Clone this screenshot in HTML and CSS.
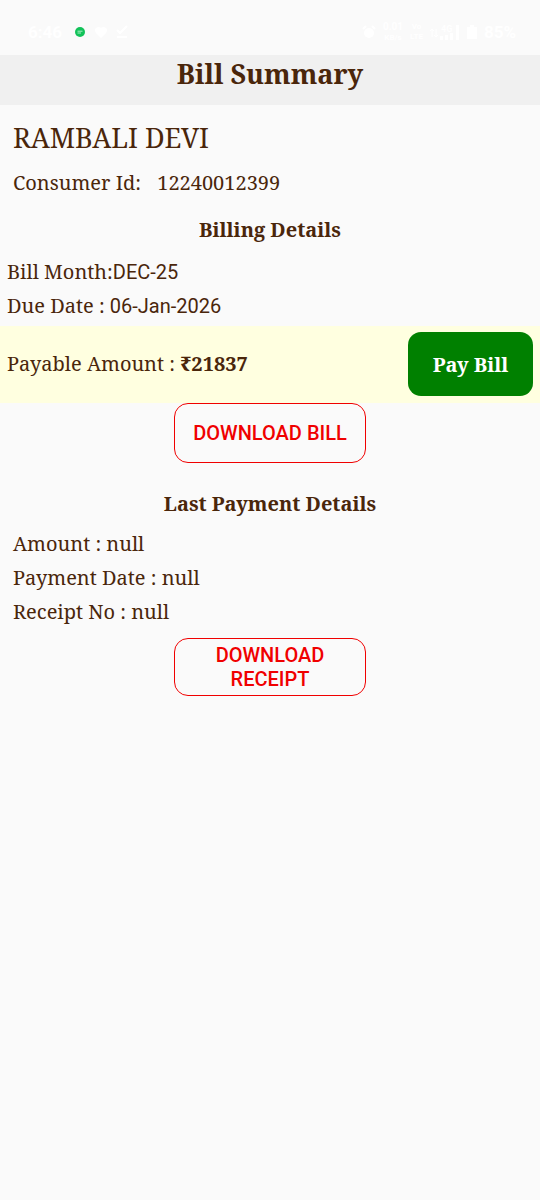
FILE: index.html
```html
<!DOCTYPE html>
<html lang="en">
<head>
<meta charset="utf-8">
<title>Bill Summary</title>
<meta name="viewport" content="width=device-width, initial-scale=1">
<link rel="stylesheet" href="styles.css">
</head>
<body>

<div class="statusbar">
  <span class="clock">6:46</span>
  <svg class="icon chat" viewBox="0 0 14 14">
    <circle cx="7" cy="7" r="5" fill="#12c259"/>
    <path d="M4.5 6.2h5M4.5 8h3.5" stroke="#b9f0cf" stroke-width="0.9"/>
  </svg>
  <svg class="icon" viewBox="0 0 14 14">
    <path d="M7 13L2 8q-2-3 0-5 3-2 5 0 2-2 5 0 2 2 0 5z" fill="#fff"/>
  </svg>
  <svg class="icon" viewBox="0 0 14 14">
    <path d="M2 5l3 3 7-7M2 12h10" fill="none" stroke="#fff" stroke-width="2"/>
  </svg>
  <span class="spacer"></span>
  <svg class="icon" viewBox="0 0 14 14">
    <circle cx="7" cy="8" r="5" fill="#fff"/>
    <path d="M1 4l3-3M13 4l-3-3" stroke="#fff" stroke-width="2"/>
  </svg>
  <span class="stack"><span class="speed">0.01</span><span>KB/s</span></span>
  <span class="stack"><span>Vo</span><span>LTE</span></span>
  <svg class="signal" viewBox="0 0 30 16">
    <path d="M2 13V5M0 7l2-2 2 2M6 5v8M4 11l2 2 2-2" fill="none" stroke="#fff"/>
    <path d="M10 12h3v4h-3zM15 11h3v5h-3zM20 9h3v7h-3zM26 1h3v15h-3z" fill="#fff"/>
    <text x="11" y="8" class="network">4G</text>
  </svg>
  <svg class="battery" viewBox="0 0 10 14">
    <path d="M3 0h4v2h3v12H0V2h3z" fill="#fff"/>
  </svg>
  <span class="clock">85%</span>
</div>

<h1>Bill Summary</h1>

<div class="consumer">
  <p class="name">RAMBALI DEVI</p>
  <p class="row"><span>Consumer Id:</span> <span class="consumer-id">12240012399</span></p>
</div>

<h2>Billing Details</h2>
<div class="billing">
  <p>Bill Month:<span class="value">DEC-25</span></p>
  <p>Due Date : <span class="value">06-Jan-2026</span></p>
</div>

<div class="payable">
  <p>Payable Amount : <b>₹21837</b></p>
  <button class="pay">Pay Bill</button>
</div>
<button class="download">DOWNLOAD BILL</button>

<h2 class="last">Last Payment Details</h2>
<div class="payment">
  <p>Amount : null</p>
  <p>Payment Date : null</p>
  <p>Receipt No : null</p>
</div>
<button class="download receipt">DOWNLOAD RECEIPT</button>

</body>
</html>
```
FILE: styles.css
```css
* {
  box-sizing: border-box;
}

body {
  margin: 0;
  background-color: #fafafa;
  color: #4a260b;
  font-family: "Noto Serif", "DejaVu Serif Condensed", "DejaVu Serif", serif;
  font-size: 20px;
  line-height: 34px;
}

h1, h2, p {
  margin: 0;
}

.statusbar {
  display: flex;
  align-items: center;
  gap: 7px;
  padding: 20px 24px 11px 28px;
  color: #fff;
  font-family: Roboto, sans-serif;
  line-height: 24px;
}

.clock {
  font-size: 17px;
  font-weight: bold;
}

.spacer {
  flex: 1;
}

.icon {
  width: 14px;
  height: 14px;
}

.chat {
  margin-left: 4px;
}

.stack {
  display: flex;
  flex-direction: column;
  font-size: 8px;
  font-weight: bold;
  line-height: 10px;
  text-align: center;
}

.speed {
  font-size: 10px;
  line-height: 12px;
}

.signal {
  width: 30px;
  height: 16px;
}

.network {
  fill: #fff;
  font-size: 9px;
  font-weight: bold;
}

.battery {
  width: 10px;
  height: 14px;
}

h1 {
  min-height: 50px;
  background-color: #f0f0f0;
  font-size: 27px;
  line-height: 38px;
  text-align: center;
}

h2 {
  font-size: 20px;
  line-height: 34px;
  text-align: center;
}

.consumer {
  padding: 12px 13px 6px;
}

.name {
  font-size: 27px;
  line-height: 42px;
}

.row {
  line-height: 48px;
}

.consumer-id {
  margin-left: 11px;
}

.billing {
  padding: 8px 7px 3px;
}

.value {
  font-family: Roboto, sans-serif;
}

.payable {
  display: flex;
  align-items: center;
  justify-content: space-between;
  padding: 6px 7px 7px;
  background-color: #ffffe0;
}

button {
  font-size: 20px;
  cursor: pointer;
}

.pay {
  width: 125px;
  height: 64px;
  border: none;
  border-radius: 13px;
  background-color: #008000;
  color: #fff;
  font-family: inherit;
  font-weight: bold;
}

.download {
  display: block;
  width: 192px;
  min-height: 60px;
  margin: 0 auto;
  padding: 4px 12px;
  border: 1px solid #f00000;
  border-radius: 14px;
  background-color: transparent;
  color: #f00000;
  font-family: Roboto, sans-serif;
  font-weight: 500;
  line-height: 24px;
}

.last {
  margin-top: 24px;
}

.payment {
  padding: 6px 13px 9px;
}

.receipt {
  min-height: 58px;
}
```
